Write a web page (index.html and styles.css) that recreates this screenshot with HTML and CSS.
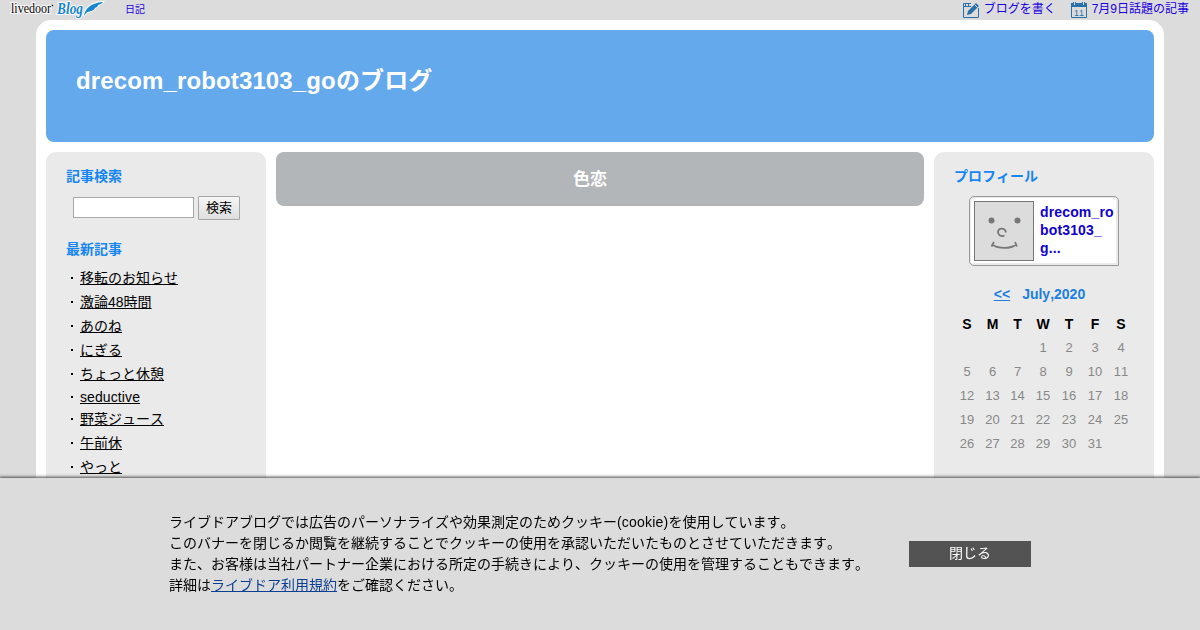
FILE: index.html
```html
<!DOCTYPE html>
<html lang="ja">
<head>
    <meta charset="UTF-8">
    <title>drecom_robot3103_goのブログ</title>
    <link rel="stylesheet" href="styles.css">
</head>
<body>
    <div class="blog-bar">
        <a href="#" class="bar-logo">
            <svg width="98" height="20" viewBox="0 0 98 20">
                <g class="logo-outline">
                    <text class="logo-livedoor" x="3" y="13" textLength="40" lengthAdjust="spacingAndGlyphs">livedoor</text>
                    <text class="logo-blog" x="49" y="13.500" textLength="26" lengthAdjust="spacingAndGlyphs">Blog</text>
                    <path class="logo-feather" d="M76 16 C77 9 82 3 95 2 C94 4 92 4 90 5 C90 7 88 7 87 8 C86 11 83 11 79 12 Z"/>
                </g>
                <circle cx="44.400" cy="5.500" r="0.8"/>
            </svg>
        </a>
        <a href="#" class="bar-category">日記</a>
        <div class="bar-menu">
            <a href="#">
                <svg width="17" height="16" viewBox="0 0 17 16">
                    <path class="icon-line" d="M8 1.500H.5V15.500H15.500V6"/>
                    <path class="icon-line" d="M1 4.500h7M2.500 2v2M5.500 2v2"/>
                    <path class="icon-fill" d="M4 13l1-4 8-8 3 3-8 8z"/>
                    <path class="icon-notch" d="M11.500 2.500l3 3"/>
                </svg>
                <span>ブログを書く</span>
            </a>
            <a href="#">
                <svg width="16" height="16" viewBox="0 0 16 16">
                    <path class="icon-line" d="M.5 2v13.500h15V2"/>
                    <path class="icon-fill" d="M0 1h2V0h3v1h6V0h3v1h2v4H0z"/>
                    <path class="icon-notch" d="M3.500 0v3M12.500 0v3"/>
                    <text class="icon-date" x="8" y="13.500">11</text>
                </svg>
                <span>7月9日話題の記事</span>
            </a>
        </div>
    </div>

    <div class="container">
        <div class="blog-header">
            <h1>drecom_robot3103_goのブログ</h1>
        </div>

        <div class="columns">
            <div class="side">
                <h2>記事検索</h2>
                <form class="search">
                    <input type="text" name="q">
                    <button type="submit">検索</button>
                </form>

                <h2>最新記事</h2>
                <ul class="recent">
                    <li><a href="#">移転のお知らせ</a></li>
                    <li><a href="#">激論48時間</a></li>
                    <li><a href="#">あのね</a></li>
                    <li><a href="#">にぎる</a></li>
                    <li><a href="#">ちょっと休憩</a></li>
                    <li class="latin"><a href="#">seductive</a></li>
                    <li><a href="#">野菜ジュース</a></li>
                    <li><a href="#">午前休</a></li>
                    <li><a href="#">やっと</a></li>
                </ul>
            </div>

            <div class="main">
                <h2>色恋</h2>
            </div>

            <div class="side">
                <h2>プロフィール</h2>
                <div class="profile">
                    <svg width="60" height="60" viewBox="0 0 60 60">
                        <rect class="face-bg" x=".5" y=".5" width="59" height="59"/>
                        <circle class="face-eye" cx="17.500" cy="19.500" r="3"/>
                        <circle class="face-eye" cx="43.500" cy="19.500" r="3"/>
                        <path class="face-line" d="M32 31.500C31 26.500 24 26.500 24 31C24 34 27 36 30.500 34.500"/>
                        <path class="face-line" d="M18.500 43.500C24 48 37 48 42 43.500M17.500 45.500L20 41M43 45.500L41 41"/>
                    </svg>
                    <a href="#">drecom_robot3103_g...</a>
                </div>

                <div class="month"><a href="#">&lt;&lt;</a><span>July,2020</span></div>
                <table class="calendar">
                    <tr><th>S</th><th>M</th><th>T</th><th>W</th><th>T</th><th>F</th><th>S</th></tr>
                    <tr><td></td><td></td><td></td><td>1</td><td>2</td><td>3</td><td>4</td></tr>
                    <tr><td>5</td><td>6</td><td>7</td><td>8</td><td>9</td><td>10</td><td>11</td></tr>
                    <tr><td>12</td><td>13</td><td>14</td><td>15</td><td>16</td><td>17</td><td>18</td></tr>
                    <tr><td>19</td><td>20</td><td>21</td><td>22</td><td>23</td><td>24</td><td>25</td></tr>
                    <tr><td>26</td><td>27</td><td>28</td><td>29</td><td>30</td><td>31</td><td></td></tr>
                </table>
            </div>
        </div>
    </div>

    <div class="cookie-banner">
        <p>
            ライブドアブログでは広告のパーソナライズや効果測定のためクッキー<span class="cookie-word">(cookie)</span>を使用しています。<br>
            このバナーを閉じるか閲覧を継続することでクッキーの使用を承認いただいたものとさせていただきます。<br>
            また、お客様は当社パートナー企業における所定の手続きにより、クッキーの使用を管理することもできます。<br>
            詳細は<a href="#">ライブドア利用規約</a>をご確認ください。
        </p>
        <button type="button">閉じる</button>
    </div>
</body>
</html>
```

FILE: styles.css
```css
* {
    margin: 0;
    padding: 0;
    box-sizing: border-box;
}

body {
    background: #dcdcdc;
    color: #000;
    font-family: "Liberation Sans", "Noto Sans CJK JP", sans-serif;
    font-size: 14px;
    font-kerning: none;
}

/* top bar */
.blog-bar {
    display: flex;
    height: 20px;
    padding: 0 10px 0 8px;
    line-height: 18px;
}

.blog-bar a {
    color: #1a00e0;
    text-decoration: none;
}

.bar-logo {
    width: 117px;
}

.bar-logo svg {
    display: block;
}

.logo-outline {
    stroke: #fff;
    stroke-width: 2px;
    paint-order: stroke;
}

.logo-livedoor {
    font-family: "Liberation Serif", serif;
    font-size: 14px;
}

.logo-blog {
    font-family: "Liberation Serif", serif;
    font-size: 16px;
    font-style: italic;
    font-weight: bold;
    fill: #1685cc;
}

.logo-feather {
    fill: #1685cc;
}

.bar-category {
    font-size: 10px;
    line-height: 20px;
}

.bar-menu {
    display: flex;
    gap: 15px;
    margin-left: auto;
    padding-right: 1px;
    font-size: 12px;
    line-height: 19px;
}

.bar-menu a {
    display: flex;
    gap: 5px;
}

.bar-menu a:first-child {
    gap: 4px;
}

.bar-menu svg {
    margin-top: 2px;
}

.icon-line {
    fill: none;
    stroke: #2a70a8;
}

.icon-fill {
    fill: #2a70a8;
}

.icon-notch {
    stroke: #dcdcdc;
}

.icon-date {
    fill: #2a70a8;
    font-size: 9px;
    text-anchor: middle;
}

/* layout */
.container {
    width: 1128px;
    height: 610px;
    margin: 0 auto;
    padding: 10px 10px 0;
    background: #fff;
    border-radius: 15px 15px 0 0;
}

.blog-header {
    height: 112px;
    padding: 33px 30px;
    background: #64a9ec;
    border-radius: 8px;
}

.blog-header h1 {
    color: #fff;
    font-size: 24px;
    letter-spacing: 0.13px;
    line-height: 36px;
}

.columns {
    display: flex;
    gap: 10px;
    height: 478px;
    margin-top: 10px;
}

.side {
    width: 220px;
    padding: 14px 20px;
    background: #eaeaea;
    border-radius: 10px 10px 0 0;
}

.side h2 {
    color: #1686f0;
    font-size: 14px;
    line-height: 20px;
}

.main {
    flex: 1;
}

.main h2 {
    height: 54px;
    padding: 1px 20px 0 0;
    background: #b2b6b9;
    border-radius: 8px;
    color: #fff;
    font-size: 17px;
    line-height: 54px;
    text-align: center;
}

/* search */
.search {
    display: flex;
    gap: 4px;
    height: 53px;
    padding: 10px 0 0 7px;
}

.search input {
    width: 121px;
    height: 21px;
    margin-top: 1px;
    border: 1px solid #a9a9a9;
    background: #fff;
}

.search button {
    width: 42px;
    height: 24px;
    border: 1px solid #a6a6a6;
    border-radius: 1px;
    background: linear-gradient(#f6f6f6, #dedede);
    font-family: inherit;
    font-size: 13px;
    line-height: 20px;
}

/* recent entries */
.recent {
    margin-top: 7px;
    list-style: none;
}

.recent li {
    display: flex;
    align-items: center;
    height: 24px;
    padding-left: 5px;
}

.recent li::before {
    content: "";
    width: 2px;
    height: 2px;
    margin-right: 7px;
    background: #000;
}

.recent .latin {
    height: 21px;
    letter-spacing: 0.1px;
}

.recent a {
    color: #000;
    line-height: 20px;
}

/* profile */
.profile {
    display: flex;
    gap: 6px;
    width: 150px;
    height: 70px;
    margin: 10px 0 0 15px;
    padding: 4px;
    border: 1px solid #999;
    border-radius: 5px 5px 0 5px;
    background: #fff;
    box-shadow: inset -2px -2px 0 #eaeaea, inset 1px 1px 0 #eaeaea;
}

.profile svg {
    flex: none;
}

.profile a {
    width: 76px;
    margin-top: 2px;
    color: #1000d0;
    font-weight: bold;
    letter-spacing: 0.15px;
    line-height: 18px;
    text-decoration: none;
    word-break: break-all;
}

.face-bg {
    fill: #dcdcdc;
    stroke: #777;
}

.face-eye {
    fill: #777;
}

.face-line {
    fill: none;
    stroke: #777;
    stroke-width: 1.8px;
}

/* calendar */
.month {
    display: flex;
    justify-content: center;
    gap: 12px;
    margin-top: 18px;
    padding-right: 9px;
    color: #1b7fe0;
    font-weight: bold;
    line-height: 20px;
}

.month a {
    color: inherit;
}

.calendar {
    width: 180px;
    margin-top: 8px;
    border-collapse: collapse;
    table-layout: fixed;
    text-align: center;
}

.calendar th,
.calendar td {
    width: 26px;
    height: 24px;
    line-height: 24px;
}

.calendar th:nth-child(2),
.calendar th:nth-child(3) {
    width: 25px;
}

.calendar td {
    color: #888;
    font-size: 13px;
}

/* cookie banner */
.cookie-banner {
    position: fixed;
    right: 0;
    bottom: 0;
    left: 0;
    display: flex;
    align-items: center;
    height: 152px;
    padding: 0 169px;
    background: #dcdcdc;
    box-shadow: 0 0 3px 1px #444;
}

.cookie-banner p {
    width: 740px;
    line-height: 21px;
    white-space: nowrap;
}

.cookie-word {
    letter-spacing: 0.2px;
}

.cookie-banner a {
    color: #0b3f92;
}

.cookie-banner button {
    width: 122px;
    height: 26px;
    padding-bottom: 2px;
    border: 0;
    background: #535353;
    color: #fff;
    font-family: inherit;
    font-size: 14px;
    line-height: 24px;
}
```
